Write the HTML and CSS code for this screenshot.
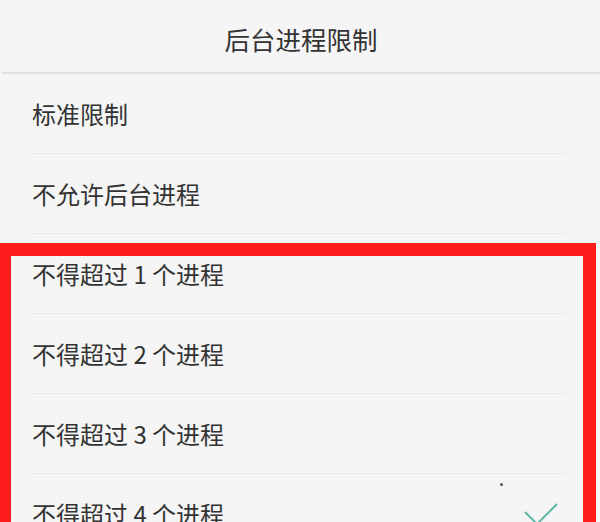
FILE: index.html
```html
<!DOCTYPE html>
<html lang="zh-CN">
<head>
    <meta charset="UTF-8">
    <meta name="viewport" content="width=device-width, initial-scale=1.0">
    <title>后台进程限制</title>
    <link rel="stylesheet" href="styles.css">
</head>
<body>

    <div class="screen">
        <div class="header">后台进程限制</div>

        <ul class="list">
            <li class="item">标准限制</li>
            <li class="item">不允许后台进程</li>
            <li class="item">不得超过 1 个进程</li>
            <li class="item">不得超过 2 个进程</li>
            <li class="item">不得超过 3 个进程</li>
            <li class="item selected">
                <span>不得超过 4 个进程</span>
                <span class="speck"></span>
                <svg class="check" width="34" height="24" viewBox="0 0 34 24">
                    <polyline points="1,9 13,21 33,1" fill="none" stroke="#5cb8a6" stroke-width="2"/>
                </svg>
            </li>
        </ul>

        <!-- red highlight drawn over the screenshot -->
        <div class="highlight"></div>
    </div>

</body>
</html>
```

FILE: styles.css
```css
body {
    margin: 0;
    background-color: #f5f5f5;
    font-family: "Noto Sans CJK SC", "Noto Sans", sans-serif;
    color: #333;
}
.screen {
    position: relative;
    height: 522px;
    overflow: hidden;
}
.header {
    box-sizing: border-box;
    height: 74px;
    padding-top: 5px;
    margin-left: 2px;
    display: flex;
    align-items: center;
    justify-content: center;
    font-size: 25.5px;
    border-bottom: 2px solid #e0e0e0;
}
.list {
    list-style: none;
    margin: 0 36px 0 32px;
    padding: 0;
}
.item {
    position: relative;
    height: 79px;
    display: flex;
    align-items: center;
    justify-content: space-between;
    font-size: 24px;
    border-bottom: 1px solid #e8e8e8;
}
.check {
    margin-right: 6px;
    margin-top: 2px;
}
/* small dark dot in the original capture */
.speck {
    position: absolute;
    left: 468px;
    top: 9px;
    width: 3px;
    height: 3px;
    border-radius: 50%;
    background-color: #555;
}
.highlight {
    position: absolute;
    top: 243px;
    left: 0;
    width: 572px;
    height: 400px;
    border-style: solid;
    border-color: #ff1c1c;
    border-width: 13px 13px 0 11px;
}
```
